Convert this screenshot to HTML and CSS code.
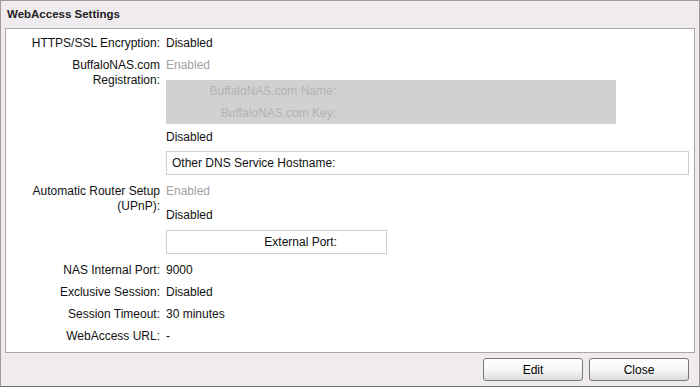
FILE: index.html
```html
<!DOCTYPE html>
<html lang="en">
<head>
  <meta charset="UTF-8" />
  <title>WebAccess Settings</title>
  <link rel="stylesheet" href="styles.css">
</head>
<body>
  <div class="window">
    <div class="title">WebAccess Settings</div>

    <div class="panel">
      <div class="row">
        <div class="label">HTTPS/SSL Encryption:</div>
        <div class="value">Disabled</div>
      </div>

      <div class="row">
        <div class="label">BuffaloNAS.com Registration:</div>
        <div class="value">
          <div class="off">Enabled</div>
          <div class="sub-box">
            <div class="sub-line"><span class="sub-label">BuffaloNAS.com Name:</span></div>
            <div class="sub-line"><span class="sub-label">BuffaloNAS.com Key:</span></div>
          </div>
          <div class="after-box">Disabled</div>
          <div class="field wide">Other DNS Service Hostname:</div>
        </div>
      </div>

      <div class="row gap">
        <div class="label">Automatic Router Setup (UPnP):</div>
        <div class="value">
          <div class="off">Enabled</div>
          <div class="second">Disabled</div>
          <div class="field short"><span class="sub-label">External Port:</span></div>
        </div>
      </div>

      <div class="row gap">
        <div class="label">NAS Internal Port:</div>
        <div class="value">9000</div>
      </div>

      <div class="row">
        <div class="label">Exclusive Session:</div>
        <div class="value">Disabled</div>
      </div>

      <div class="row">
        <div class="label">Session Timeout:</div>
        <div class="value">30 minutes</div>
      </div>

      <div class="row">
        <div class="label">WebAccess URL:</div>
        <div class="value">-</div>
      </div>
    </div>

    <div class="footer">
      <button class="btn">Edit</button>
      <button class="btn">Close</button>
    </div>
  </div>
</body>
</html>
```

FILE: styles.css
```css
* {
  box-sizing: border-box;
}

body {
  margin: 0;
  padding: 0;
  font-family: 'Liberation Sans', Arial, sans-serif;
  font-size: 12px;
  color: #111;
  background: #fff;
}

.window {
  width: 700px;
  height: 387px;
  background: #efebef;
  border: 1px solid #9e9a9e;
  border-bottom-color: #6f6c6f;
  display: flex;
  flex-direction: column;
}

.title {
  height: 27px;
  line-height: 27px;
  padding-left: 6px;
  font-size: 11.5px;
  font-weight: bold;
  color: #222;
}

.panel {
  margin: 0 4px;
  height: 325px;
  background: #fff;
  border: 1px solid #aaa6aa;
  padding: 3px 5px 5px 14px;
}

.row {
  display: grid;
  grid-template-columns: 140px 1fr;
  column-gap: 6px;
}

.row.gap {
  margin-top: 5px;
}

.label {
  text-align: right;
  line-height: 15px;
  padding-top: 3.5px;
}

.value {
  line-height: 22px;
}

.off {
  color: #a3a3a3;
}

.sub-box {
  margin-top: 4px;
  width: 450px;
  background: #d1d1d1;
  color: #b3b3b3;
}

.sub-line {
  height: 22px;
}

.sub-label {
  display: inline-block;
  width: 170px;
  text-align: right;
}

.after-box {
  margin-top: 2px;
}

.second {
  margin-top: 2px;
}

.field {
  height: 24px;
  border: 1px solid #cfcfcf;
  margin-top: 3px;
}

.field.wide {
  padding-left: 5px;
}

.field.short {
  width: 221px;
  margin-top: 4px;
}

.footer {
  display: flex;
  justify-content: flex-end;
  gap: 6px;
  padding: 5px 10px 0 0;
}

.btn {
  width: 100px;
  height: 23px;
  font-family: 'Liberation Sans', Arial, sans-serif;
  font-size: 12px;
  color: #000;
  border: 1px solid #787878;
  border-radius: 3px;
  background: linear-gradient(#ffffff, #f6f6f6 55%, #dcdcdc);
  padding: 0;
}
```
